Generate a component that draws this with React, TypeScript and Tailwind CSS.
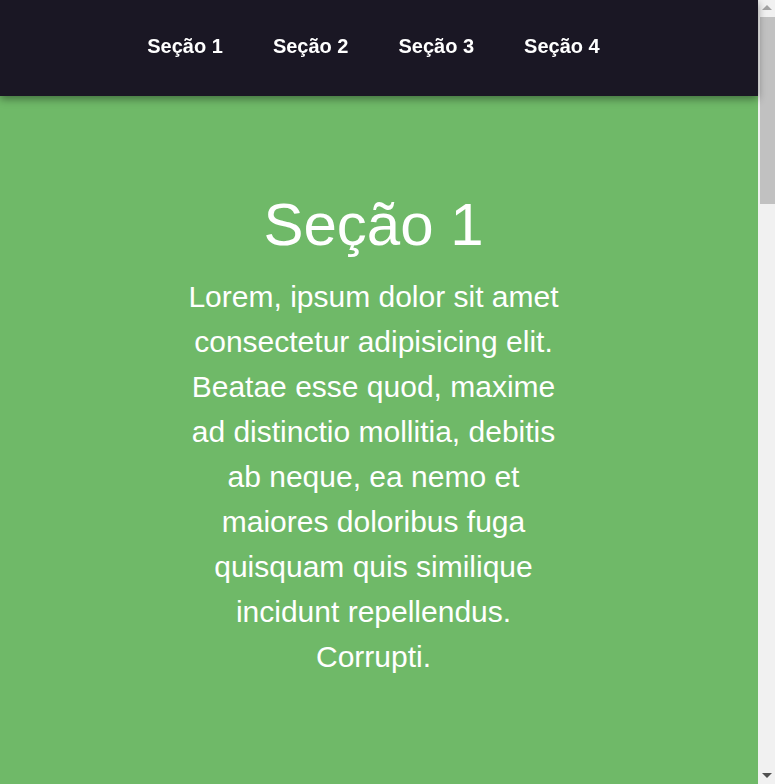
import React from 'react';

const sections = [
  { id: 'secao1', title: 'Seção 1', bg: 'bg-[#6fb968]' },
  { id: 'secao2', title: 'Seção 2', bg: 'bg-[#5a8fd1]' },
  { id: 'secao3', title: 'Seção 3', bg: 'bg-[#d9a441]' },
  { id: 'secao4', title: 'Seção 4', bg: 'bg-[#c25a6a]' },
];

const text =
  'Lorem, ipsum dolor sit amet consectetur adipisicing elit. Beatae esse quod, maxime ad distinctio mollitia, debitis ab neque, ea nemo et maiores doloribus fuga quisquam quis similique incidunt repellendus. Corrupti.';

const App: React.FC = () => {
  return (
    <div className="flex h-screen overflow-hidden font-['Liberation_Sans',Arial,sans-serif] text-white">
      {/* Page */}
      <div className="relative flex-1">
        {/* Navbar */}
        <nav className="absolute top-0 left-0 right-0 z-10 h-[96px] bg-[#1a1724] shadow-[0_3px_8px_rgba(0,0,0,0.4)]">
          <ul className="flex h-full items-center justify-center gap-[50px] pr-[11px] pb-[4px]">
            {sections.map((s) => (
              <li key={s.id}>
                <a href={`#${s.id}`} className="text-[20px] font-bold text-white">
                  {s.title}
                </a>
              </li>
            ))}
          </ul>
        </nav>

        <div className="h-full overflow-y-auto [scrollbar-width:none]">
          {sections.map((s) => (
            <section
              key={s.id}
              id={s.id}
              className={`flex h-screen flex-col items-center justify-center pt-[84px] pr-[11px] text-center ${s.bg}`}
            >
              <h1 className="text-[60px] leading-[69px]">{s.title}</h1>
              <p className="mt-[15px] w-[380px] text-[30px] leading-[45px]">{text}</p>
            </section>
          ))}
        </div>
      </div>

      {/* Scrollbar */}
      <div className="flex w-[17px] flex-col bg-[#f1f1f1]">
        <div className="flex h-[17px] items-start justify-center pt-[5px] pl-[1px]">
          <div className="h-0 w-0 border-x-[5px] border-b-[5px] border-x-transparent border-b-[#a3a3a3]" />
        </div>
        <div className="ml-[2px] h-[187px] bg-[#c1c1c1]" />
        <div className="flex-1" />
        <div className="flex h-[17px] items-start justify-center pt-[6px] pl-[1px]">
          <div className="h-0 w-0 border-x-[5px] border-t-[5px] border-x-transparent border-t-[#505050]" />
        </div>
      </div>
    </div>
  );
};

export default App;
